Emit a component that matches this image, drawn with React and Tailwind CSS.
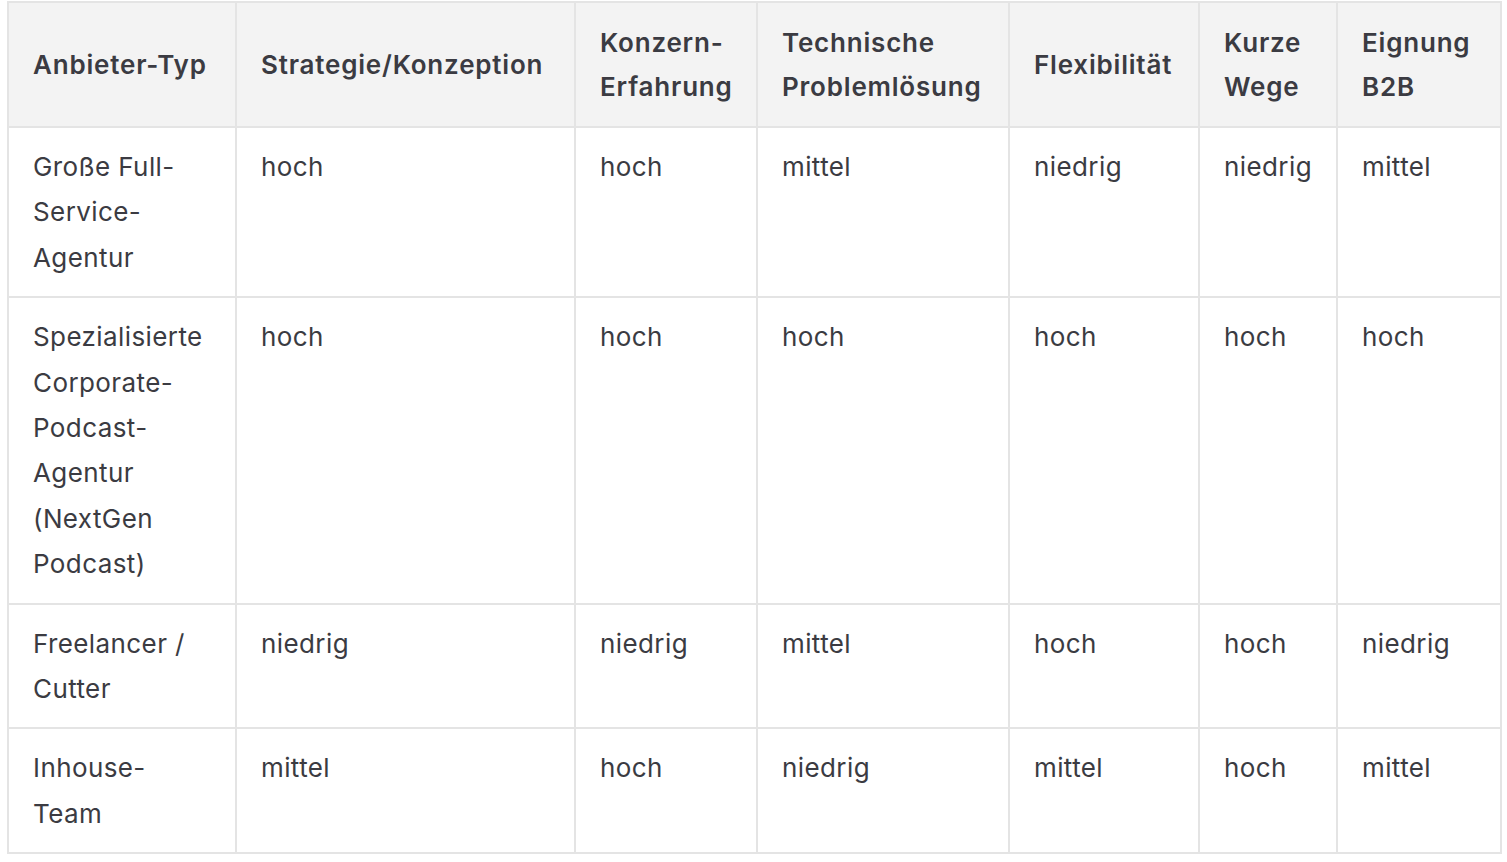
const headers = [
    'Anbieter-Typ',
    'Strategie/Konzeption',
    'Konzern-Erfahrung',
    'Technische Problemlösung',
    'Flexibilität',
    'Kurze Wege',
    'Eignung B2B',
];

const widths = ['w-[228px]', 'w-[339px]', 'w-[182px]', 'w-[252px]', 'w-[190px]', 'w-[138px]', 'w-[164px]'];

const rows = [
    ['Große Full-Service-Agentur', 'hoch', 'hoch', 'mittel', 'niedrig', 'niedrig', 'mittel'],
    ['Spezialisierte Corporate-Podcast-Agentur (NextGen Podcast)', 'hoch', 'hoch', 'hoch', 'hoch', 'hoch', 'hoch'],
    ['Freelancer / Cutter', 'niedrig', 'niedrig', 'mittel', 'hoch', 'hoch', 'niedrig'],
    ['Inhouse-Team', 'mittel', 'hoch', 'niedrig', 'mittel', 'hoch', 'mittel'],
];

export default function App() {
    return (
        <div className="min-h-screen bg-white pl-[7px] pt-[1px] font-['Inter',sans-serif] text-[#3b3b42]">
            <table className="w-[1495px] table-fixed border-collapse border-2 border-[#e4e4e4] text-[26px] leading-[45.4px] tracking-[0.4px]">
                <thead>
                    <tr className="bg-[#f3f3f3]">
                        {headers.map((h, i) => (
                            <th
                                key={h}
                                className={`${widths[i]} border-2 border-[#e4e4e4] px-[24px] py-[17.5px] text-left align-middle font-semibold leading-[44px] tracking-[0.8px]`}
                            >
                                {h}
                            </th>
                        ))}
                    </tr>
                </thead>
                <tbody>
                    {rows.map((row) => (
                        <tr key={row[0]}>
                            {row.map((cell, i) => (
                                <td key={i} className="border-2 border-[#e4e4e4] px-[24px] py-[16px] align-top">
                                    {cell}
                                </td>
                            ))}
                        </tr>
                    ))}
                </tbody>
            </table>
        </div>
    );
}
